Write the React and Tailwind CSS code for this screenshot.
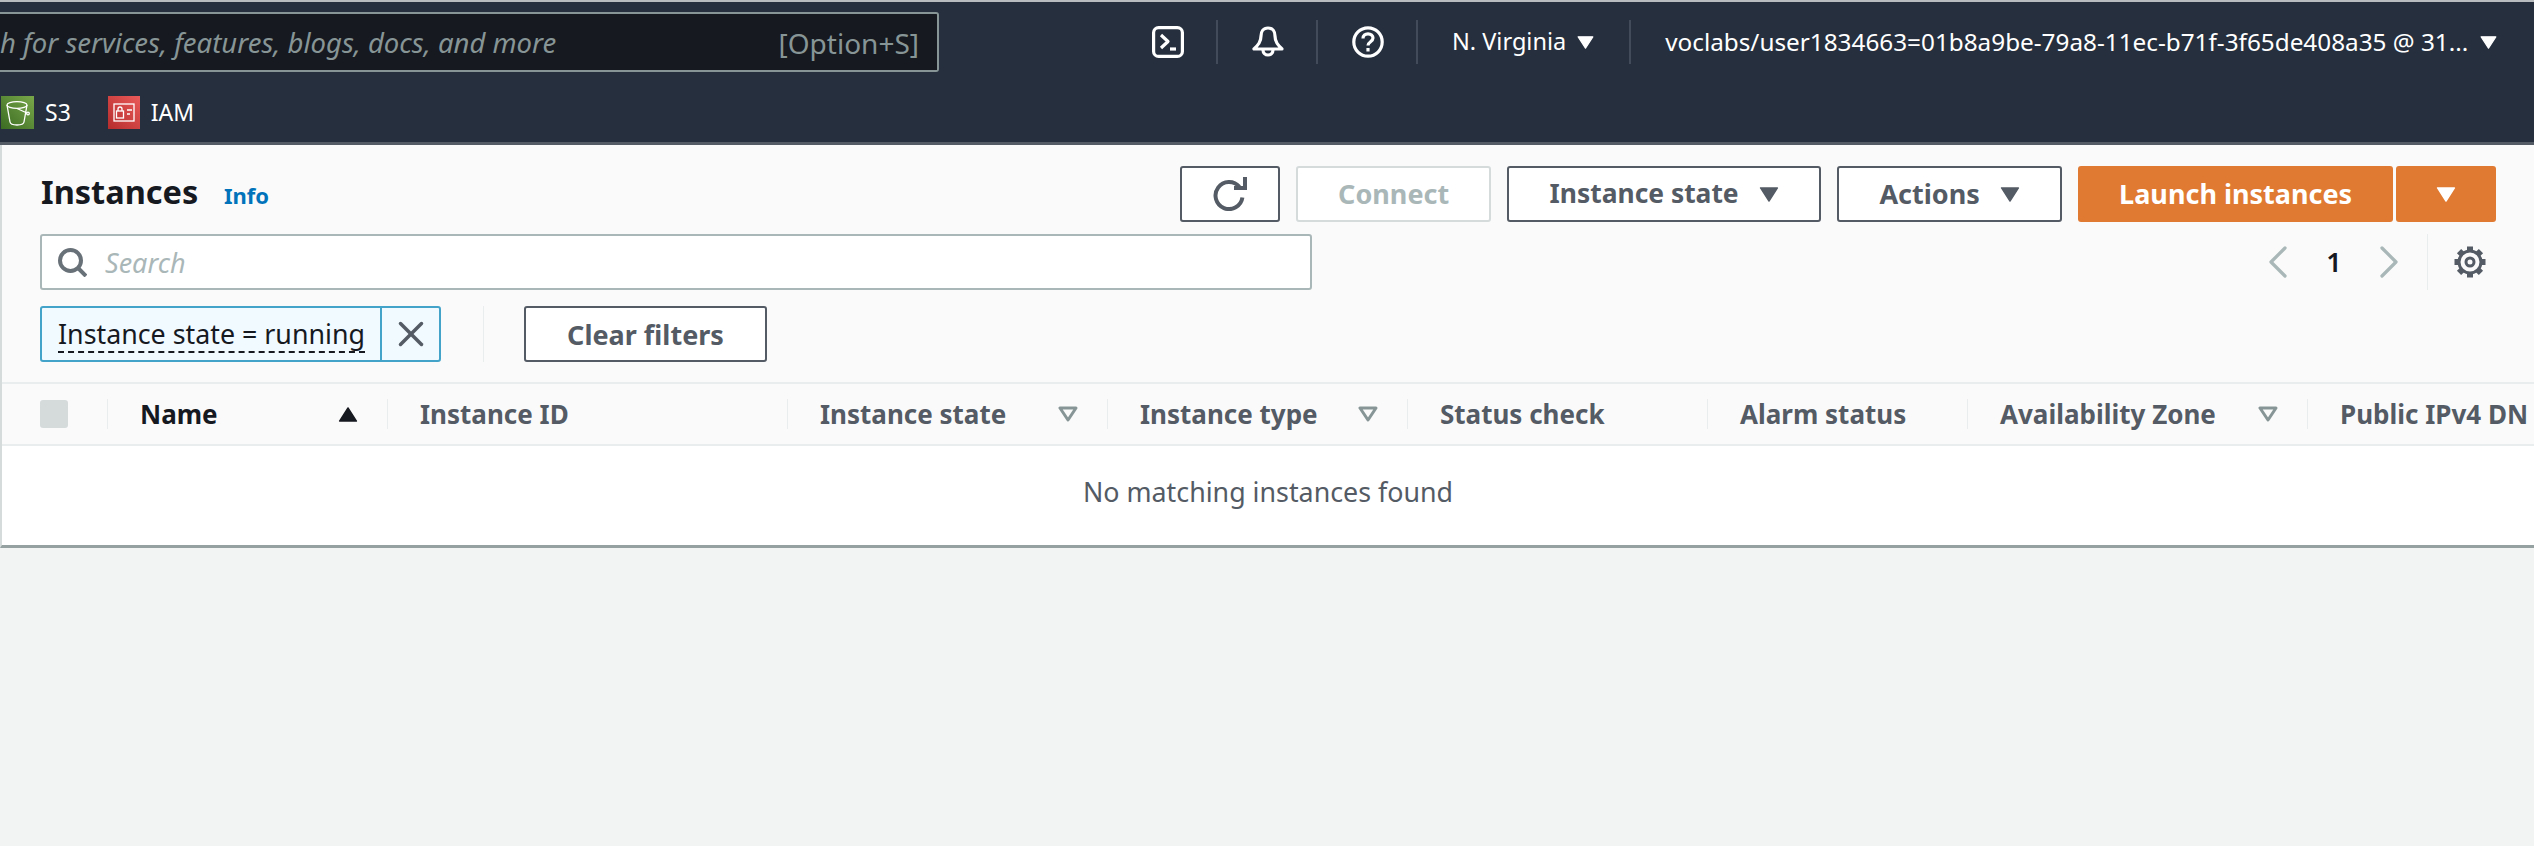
import { X, ChevronLeft, ChevronRight } from 'lucide-react';

const FONT = "font-['Noto_Sans','Open_Sans',sans-serif]";

const columns = [
  { label: 'Name', width: 'w-[280px]', dark: true, sort: true },
  { label: 'Instance ID', width: 'w-[400px]' },
  { label: 'Instance state', width: 'w-[320px]', filter: true },
  { label: 'Instance type', width: 'w-[300px]', filter: true },
  { label: 'Status check', width: 'w-[300px]' },
  { label: 'Alarm status', width: 'w-[260px]' },
  { label: 'Availability Zone', width: 'w-[340px]', filter: true },
  { label: 'Public IPv4 DN', width: 'w-[240px]' },
];

const Caret = ({ className }) => (
  <svg className={className} viewBox="0 0 20 16" fill="currentColor">
    <path d="M1 1h18L10 15z" stroke="currentColor" strokeWidth="1.5" strokeLinejoin="round" />
  </svg>
);

const NavDivider = () => <div className="w-[2px] h-[44px] bg-[#414b5a] shrink-0" />;

const TerminalIcon = () => (
  <svg className="w-[32px] h-[32px]" viewBox="0 0 32 32" fill="none" stroke="white" strokeWidth="3.2">
    <rect x="1.6" y="1.6" width="28.8" height="28.8" rx="5" />
    <path d="M9 9l7 6.500-7 6.500" strokeLinejoin="round" />
    <path d="M18 23h6" />
  </svg>
);

const BellIcon = () => (
  <svg className="w-[32px] h-[32px]" viewBox="0 0 32 32" fill="none" stroke="white" strokeWidth="3.2">
    <path d="M16 2c-5 0-7 4-7 8 0 6-3 9-7 13h28c-4-4-7-7-7-13 0-4-2-8-7-8z" strokeLinejoin="round" />
    <path d="M11 24a5 5 0 0 0 10 0" />
  </svg>
);

const HelpIcon = () => (
  <svg className="w-[32px] h-[32px]" viewBox="0 0 32 32" fill="none" stroke="white" strokeWidth="3.2">
    <circle cx="16" cy="16" r="14.2" />
    <path d="M11 12.500c0-3 2.200-4.700 5-4.700s5 1.700 5 4.300c0 3.600-5 3.600-5 7.400" />
    <path d="M16 22v3.500" />
  </svg>
);

const RefreshIcon = () => (
  <svg className="w-[34px] h-[34px]" viewBox="0 0 34 34" fill="none" stroke="currentColor" strokeWidth="4">
    <path d="M29.400 20.500A13.500 13.500 0 1 1 26.400 9.900" />
    <path d="M21 11h11V0" />
  </svg>
);

const SearchIcon = () => (
  <svg className="w-[29px] h-[29px] shrink-0 text-[#687078]" viewBox="0 0 29 29" fill="none" stroke="currentColor" strokeWidth="4">
    <circle cx="12.500" cy="12.500" r="10.500" />
    <path d="M20 20l8 8" />
  </svg>
);

const GearIcon = () => (
  <svg className="w-[32px] h-[32px] shrink-0 text-[#545b64]" viewBox="0 0 32 32" fill="none" stroke="currentColor">
    <circle cx="16" cy="16" r="11" strokeWidth="3" />
    <circle cx="16" cy="16" r="4" strokeWidth="3" />
    {[0, 45, 90, 135, 180, 225, 270, 315].map((deg) => (
      <rect key={deg} x="13" y="0.500" width="6" height="4.500" fill="currentColor" stroke="none" transform={`rotate(${deg} 16 16)`} />
    ))}
  </svg>
);

const S3Icon = () => (
  <svg className="w-[33px] h-[33px] shrink-0" viewBox="0 0 33 33">
    <defs>
      <linearGradient id="s3g" x1="0" y1="1" x2="1" y2="0">
        <stop offset="0" stopColor="#3a6b22" />
        <stop offset="1" stopColor="#79a84a" />
      </linearGradient>
    </defs>
    <rect width="33" height="33" fill="url(#s3g)" />
    <g fill="none" stroke="#fff" strokeWidth="1.300">
      <ellipse cx="16" cy="9" rx="10" ry="3.400" />
      <path d="M6 9l3 17c.3 2 3.500 3 7 3s6.700-1 7-3l3-17" />
      <path d="M16 12.500l10 4.500" />
      <circle cx="27" cy="17.500" r="1.300" />
    </g>
  </svg>
);

const IamIcon = () => (
  <svg className="w-[32px] h-[33px] shrink-0" viewBox="0 0 32 33">
    <defs>
      <linearGradient id="iamg" x1="0" y1="1" x2="1" y2="0">
        <stop offset="0" stopColor="#b52c2c" />
        <stop offset="1" stopColor="#ea5a5a" />
      </linearGradient>
    </defs>
    <rect width="32" height="33" fill="url(#iamg)" />
    <g fill="none" stroke="#fff" strokeWidth="1.300">
      <rect x="6" y="8" width="20" height="17" />
      <rect x="8.500" y="15" width="7" height="7" />
      <path d="M10 15v-2a2 2 0 0 1 4 0v2" />
      <path d="M19 14h5M19 18h3" />
    </g>
  </svg>
);

const OutlineButton = ({ className = '', children, disabled }) => (
  <button
    className={`h-[56px] shrink-0 flex items-center justify-center rounded-[3px] border-2 bg-white text-[27px] font-bold ${
      disabled ? 'border-[#d5dbdb] text-[#aab7b8]' : 'border-[#545b64] text-[#545b64]'
    } ${className}`}
  >
    {children}
  </button>
);

const HeaderCell = ({ col }) => (
  <div className={`${col.width} h-[60px] shrink-0 flex items-center`}>
    <div className="w-[1px] h-[30px] bg-[#eaeded] shrink-0" />
    <span className={`ml-[32px] text-[26px] font-bold whitespace-nowrap ${col.dark ? 'text-[#16191f]' : 'text-[#545b64]'}`}>
      {col.label}
    </span>
    {col.sort && <Caret className="ml-auto mr-[29px] w-[20px] h-[15px] rotate-180 text-[#16191f]" />}
    {col.filter && (
      <svg className="ml-auto mr-[29px] w-[20px] h-[16px] text-[#879596]" viewBox="0 0 20 16" fill="none" stroke="currentColor" strokeWidth="3">
        <path d="M2 2h16l-8 12z" strokeLinejoin="round" />
      </svg>
    )}
  </div>
);

export default function App() {
  return (
    <div className={`${FONT} w-[2534px] h-[846px] overflow-hidden bg-[#f2f3f3]`}>
      <div className="h-[2px] bg-[#b9bcbf]" />

      {/* Top nav */}
      <div className="h-[143px] bg-[#252f3e] border-b-[3px] border-[#545b64]">
        <div className="h-[80px] flex items-start">
          <div className="w-[939px] h-[60px] mt-[10px] pt-[2px] bg-[#16191f] border-2 border-l-0 border-[#879596] rounded-r-[3px] flex items-center shrink-0">
            <span className="text-[27.5px] italic text-[#879596] whitespace-nowrap">
              h for services, features, blogs, docs, and more
            </span>
            <span className="ml-auto mr-[18px] text-[28px] text-[#879596] whitespace-nowrap">[Option+S]</span>
          </div>

          <div className="h-[44px] mt-[18px] flex items-center text-white whitespace-nowrap">
            <div className="ml-[213px]"><TerminalIcon /></div>
            <div className="ml-[32px]"><NavDivider /></div>
            <div className="ml-[34px]"><BellIcon /></div>
            <div className="ml-[32px]"><NavDivider /></div>
            <div className="ml-[34px]"><HelpIcon /></div>
            <div className="ml-[32px]"><NavDivider /></div>
            <span className="ml-[34px] text-[23.5px]">N. Virginia</span>
            <Caret className="ml-[11px] w-[17px] h-[13px]" />
            <div className="ml-[35px]"><NavDivider /></div>
            <span className="ml-[34px] text-[24.3px]">voclabs/user1834663=01b8a9be-79a8-11ec-b71f-3f65de408a35 @ 31...</span>
            <Caret className="ml-[12px] w-[17px] h-[13px]" />
          </div>
        </div>

        <div className="flex items-center h-[33px] mt-[14px] pl-[1px] text-white text-[23px]">
          <S3Icon />
          <span className="ml-[11px]">S3</span>
          <div className="ml-[37px]"><IamIcon /></div>
          <span className="ml-[11px]">IAM</span>
        </div>
      </div>

      {/* Instances panel */}
      <div className="h-[403px] bg-[#fafafa] border-l-2 border-[#d5dbdb] border-b-[3px] border-b-[#95a0a1] overflow-hidden">
        <div className="h-[239px] pl-[38px] border-b-2 border-[#eaeded]">
          <div className="flex items-start pt-[21px]">
            <h1 className="w-[184px] text-[32.5px] leading-[52px] font-bold text-[#16191f] shrink-0 pl-[1px]">Instances</h1>
            <a className="h-[56px] text-[22px] leading-[58px] font-bold text-[#0073bb] shrink-0">Info</a>
            <div className="ml-[911px] flex gap-[16px]">
              <OutlineButton className="w-[100px]">
                <RefreshIcon />
              </OutlineButton>
              <OutlineButton className="w-[195px]" disabled>Connect</OutlineButton>
              <OutlineButton className="w-[314px] gap-[20px]">
                <span className="text-[26.4px]">Instance state</span> <Caret className="w-[20px] h-[15px]" />
              </OutlineButton>
              <OutlineButton className="w-[225px] gap-[20px]">
                Actions <Caret className="w-[20px] h-[15px]" />
              </OutlineButton>
              <div className="flex gap-[3px]">
                <button className="w-[315px] h-[56px] rounded-[3px] bg-[#e07a32] text-white text-[27px] font-bold">
                  Launch instances
                </button>
                <button className="w-[100px] h-[56px] rounded-[3px] bg-[#e07a32] text-white flex items-center justify-center">
                  <Caret className="w-[20px] h-[15px]" />
                </button>
              </div>
            </div>
          </div>

          <div className="flex items-center mt-[12px] h-[56px]">
            <div className="w-[1272px] h-[56px] bg-white border-2 border-[#aab7b8] rounded-[3px] flex items-center pl-[16px] shrink-0">
              <SearchIcon />
              <span className="ml-[18px] pt-[2px] text-[27px] italic text-[#aab7b8]">Search</span>
            </div>
            <ChevronLeft className="ml-[938px] w-[56px] h-[56px] text-[#aab7b8] shrink-0" strokeWidth={1.4} />
            <span className="ml-[17px] w-[22px] text-center text-[27px] font-semibold text-[#16191f] shrink-0">1</span>
            <ChevronRight className="ml-[16px] w-[56px] h-[56px] text-[#aab7b8] shrink-0" strokeWidth={1.4} />
            <div className="ml-[10px] w-[1px] h-[56px] bg-[#eaeded] shrink-0" />
            <div className="ml-[26px]"><GearIcon /></div>
          </div>

          <div className="flex items-center mt-[16px] h-[56px]">
            <div className="w-[401px] h-[56px] bg-[#f1faff] border-2 border-[#44a3c9] rounded-[3px] flex shrink-0">
              <div className="w-[340px] flex items-center pl-[16px] pt-[2px] border-r-2 border-[#44a3c9] shrink-0">
                <span className="text-[26.8px] leading-[34px] text-[#16191f] border-b-2 border-dashed border-[#16191f] whitespace-nowrap">
                  Instance state = running
                </span>
              </div>
              <div className="flex-1 flex items-center justify-center">
                <X className="w-[42px] h-[42px] text-[#545b64]" strokeWidth={2} />
              </div>
            </div>
            <div className="ml-[42px] w-[1px] h-[56px] bg-[#eaeded]" />
            <OutlineButton className="ml-[40px] w-[243px] pt-[2px]">Clear filters</OutlineButton>
          </div>
        </div>

        {/* Table */}
        <div className="h-[62px] flex items-center border-b-2 border-[#eaeded]">
          <div className="w-[105px] shrink-0 pl-[38px]">
            <div className="w-[28px] h-[28px] rounded-[3px] bg-[#d5dbdb]" />
          </div>
          {columns.map((col) => (
            <HeaderCell key={col.label} col={col} />
          ))}
        </div>
        <div className="h-[100px] pb-[8px] bg-white flex items-center justify-center text-[26.8px] text-[#545b64]">
          No matching instances found
        </div>
      </div>
    </div>
  );
}
